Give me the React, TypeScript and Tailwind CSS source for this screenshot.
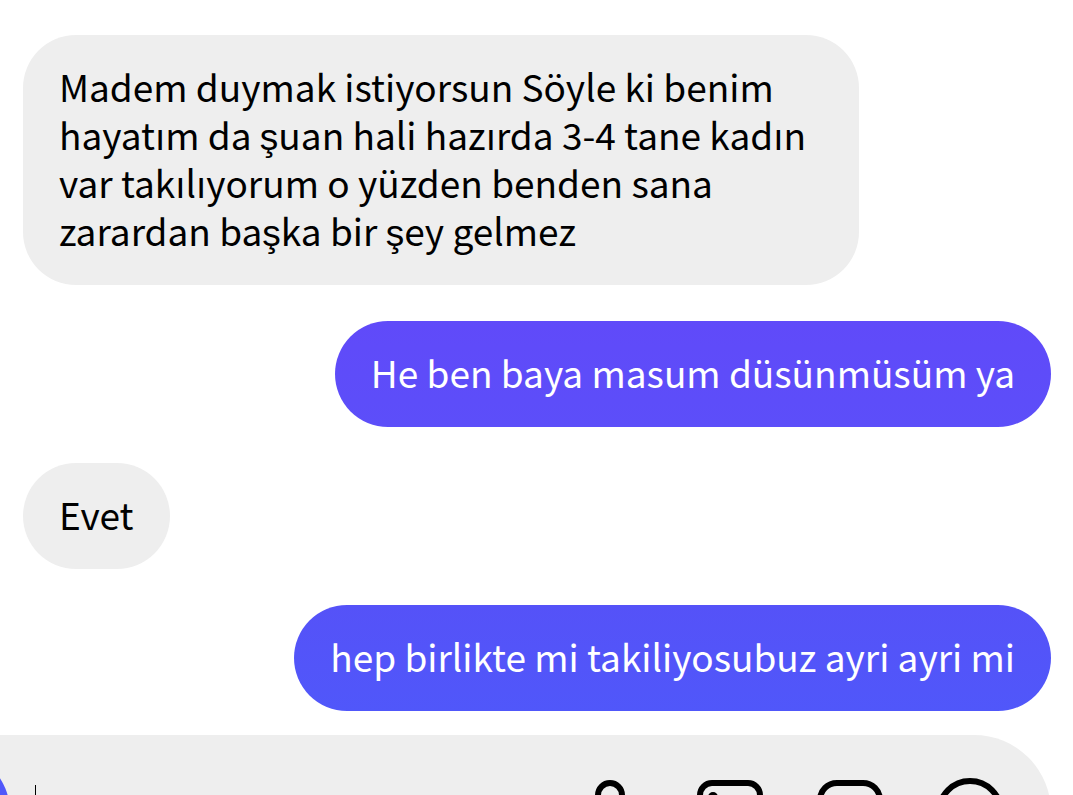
import { Camera } from "lucide-react";
import clsx from "clsx";

interface Message {
  id: number;
  text: string;
  mine: boolean;
  color: string;
}

const messages: Message[] = [
  {
    id: 1,
    text: "Madem duymak istiyorsun Söyle ki benim hayatım da şuan hali hazırda 3-4 tane kadın var takılıyorum o yüzden benden sana zarardan başka bir şey gelmez",
    mine: false,
    color: "bg-[#eeeeee] text-black",
  },
  {
    id: 2,
    text: "He ben baya masum düsünmüsüm ya",
    mine: true,
    color: "bg-linear-to-b from-[#604af9] to-[#5c4ef9] text-white",
  },
  { id: 3, text: "Evet", mine: false, color: "bg-[#eeeeee] text-black" },
  {
    id: 4,
    text: "hep birlikte mi takiliyosubuz ayri ayri mi",
    mine: true,
    color: "bg-linear-to-b from-[#5552f8] to-[#5057fa] text-white",
  },
];

const iconProps = {
  viewBox: "0 0 72 72",
  fill: "none",
  stroke: "currentColor",
  strokeWidth: 6,
  strokeLinecap: "round" as const,
  className: "size-[72px]",
};

const MicIcon = () => (
  <svg {...iconProps}>
    <rect x="24" y="7" width="24" height="38" rx="12" />
    <path d="M12 32a24 24 0 0 0 48 0M36 56v11" />
  </svg>
);

const GalleryIcon = () => (
  <svg {...iconProps}>
    <rect x="6" y="7" width="60" height="60" rx="12" />
    <circle cx="19" cy="21" r="5" fill="currentColor" stroke="none" />
    <path d="m8 58 18-18 14 14 12-12 14 13" />
  </svg>
);

const StickerIcon = () => (
  <svg {...iconProps}>
    <path d="M40 67H23A17 17 0 0 1 6 50V24A17 17 0 0 1 23 7h26a17 17 0 0 1 17 17v17L40 67V53a12 12 0 0 1 12-12h14" />
  </svg>
);

const PlusIcon = () => (
  <svg {...iconProps}>
    <circle cx="36" cy="36" r="31" />
    <path d="M36 22v28M22 36h28" />
  </svg>
);

const actions = [
  { label: "Sesli mesaj", Icon: MicIcon },
  { label: "Galeri", Icon: GalleryIcon },
  { label: "Çıkartma", Icon: StickerIcon },
  { label: "Daha fazla", Icon: PlusIcon },
];

export default function App() {
  return (
    <main className="flex h-screen flex-col overflow-hidden bg-white font-['Noto_Sans_CJK_SC',sans-serif] text-[37px] leading-[48px]">
      {/* Messages */}
      <ul className="flex shrink-0 flex-col gap-9 pt-[35px] pr-[22px] pb-6 pl-[23px]">
        {messages.map(({ id, text, mine, color }) => (
          <li
            key={id}
            className={clsx(
              "max-w-[836px] rounded-[53px] px-9 pt-[27px] pb-[31px]",
              mine ? "self-end" : "self-start",
              color
            )}
          >
            {text}
          </li>
        ))}
      </ul>

      {/* Composer */}
      <form className="mr-[22px] -ml-32 flex h-[154px] shrink-0 items-center rounded-full bg-[#eeeeee] pr-[45px] pl-[14px]">
        <button
          type="button"
          aria-label="Kamera"
          className="flex size-[124px] shrink-0 items-center justify-center rounded-full bg-[#5057fa] text-white"
        >
          <Camera className="size-16" />
        </button>

        <input
          type="text"
          aria-label="Mesaj"
          className="ml-[25px] h-[54px] min-w-0 flex-1 border-l border-black bg-transparent pl-2 outline-none"
        />

        <div className="flex gap-12">
          {actions.map(({ label, Icon }) => (
            <button key={label} type="button" aria-label={label}>
              <Icon />
            </button>
          ))}
        </div>
      </form>
    </main>
  );
}
